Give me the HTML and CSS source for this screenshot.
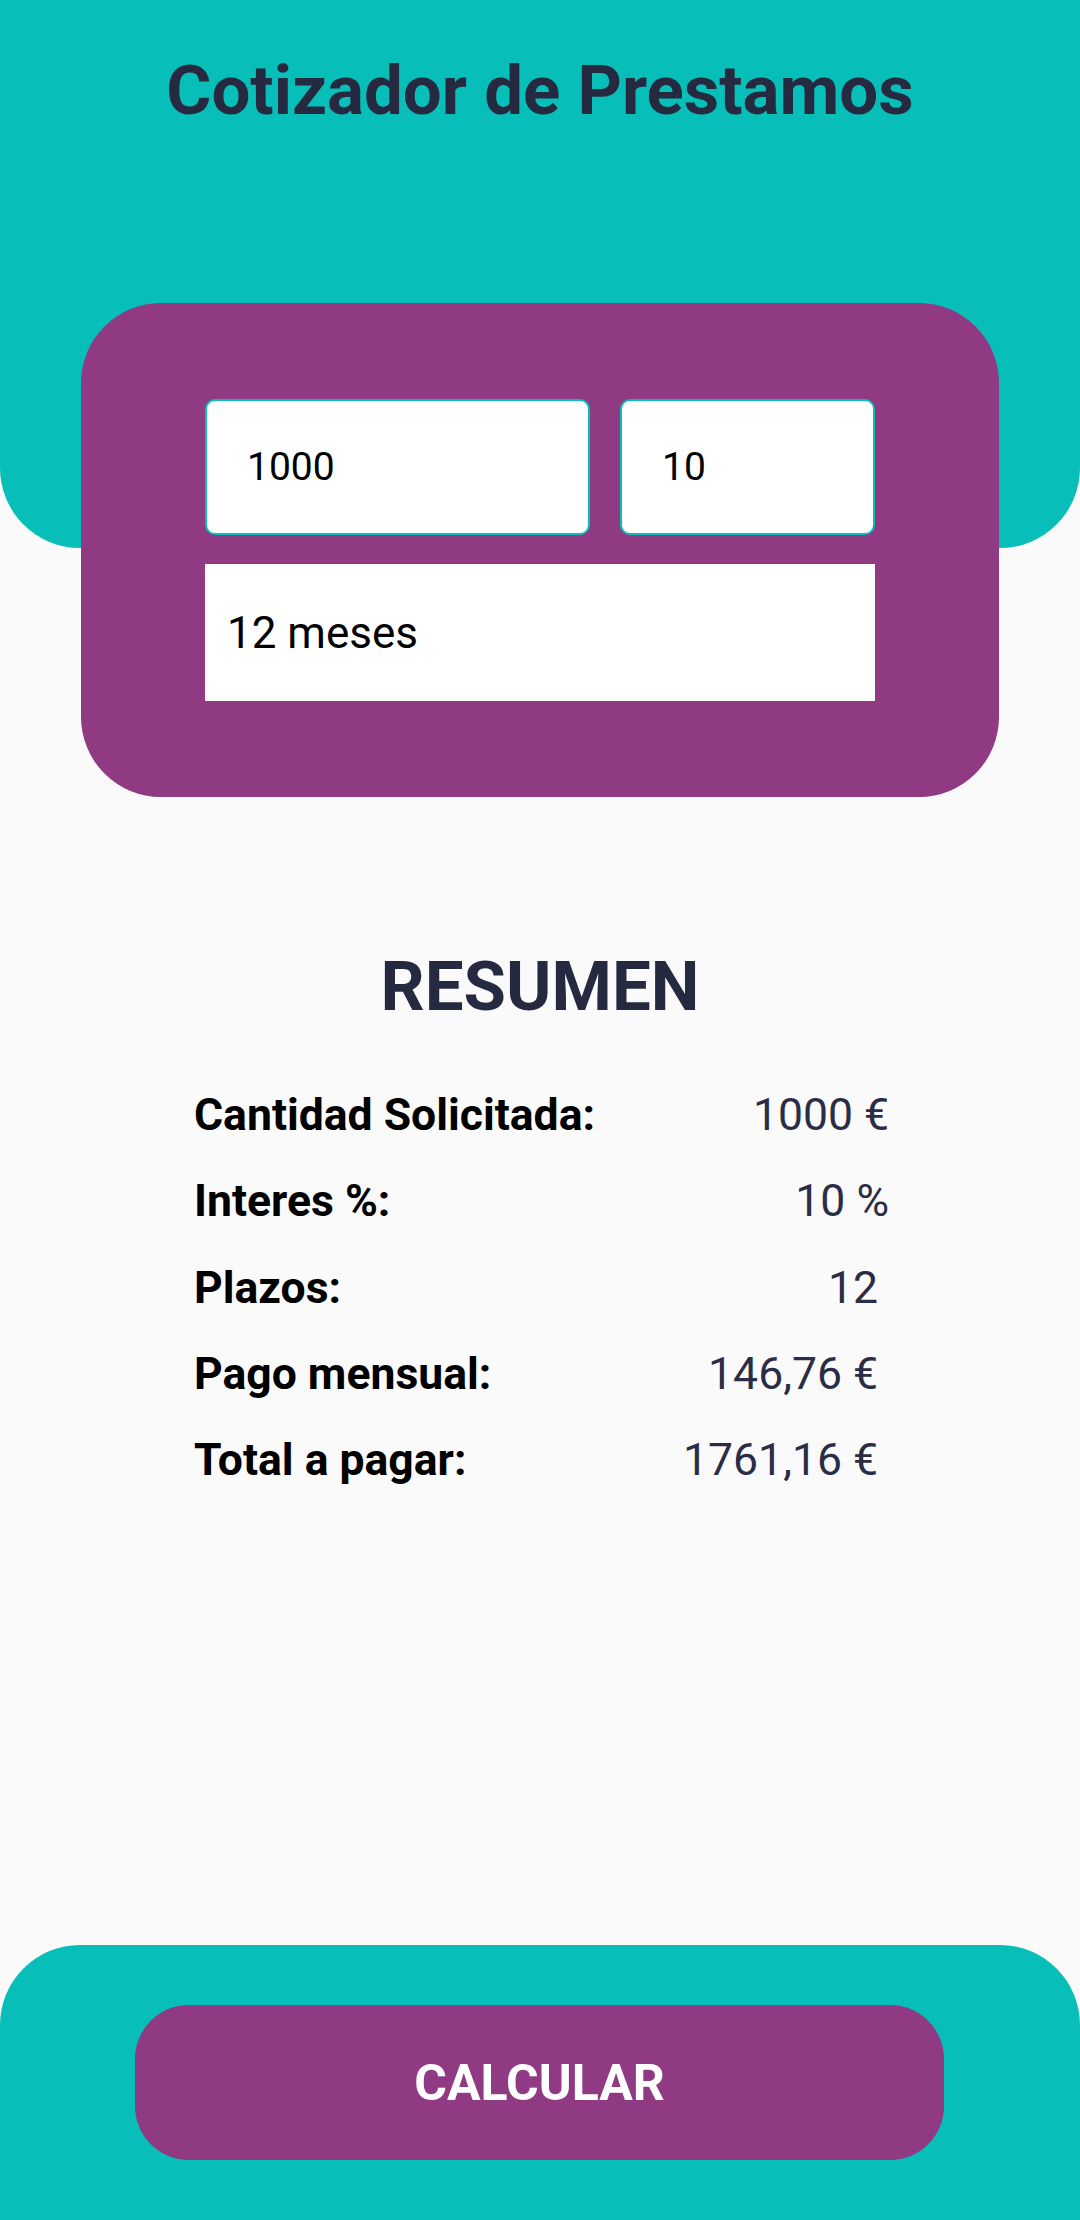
FILE: index.html
```html
<!DOCTYPE html>
<html lang="es">
<head>
<meta charset="utf-8">
<title>Cotizador de Prestamos</title>
<link rel="stylesheet" href="styles.css">
</head>
<body>
<div class="app">
  <header class="header">
    <h1 class="title">Cotizador de Prestamos</h1>
  </header>
  <section class="card">
    <div class="inputs-row">
      <div class="field field-amount">1000</div>
      <div class="field field-rate">10</div>
    </div>
    <div class="select">12 meses</div>
  </section>
  <section class="summary">
    <h2 class="summary-title">RESUMEN</h2>
    <div class="rows">
      <div class="row"><span class="label">Cantidad Solicitada:</span><span class="value">1000 €</span></div>
      <div class="row"><span class="label">Interes %:</span><span class="value">10 %</span></div>
      <div class="row"><span class="label">Plazos:</span><span class="value">12 </span></div>
      <div class="row"><span class="label">Pago mensual:</span><span class="value">146,76 € </span></div>
      <div class="row"><span class="label">Total a pagar:</span><span class="value">1761,16 € </span></div>
    </div>
  </section>
  <footer class="footer">
    <button class="calc-btn">CALCULAR</button>
  </footer>
</div>
</body>
</html>
```
FILE: styles.css
```css
* { box-sizing: border-box; }
html, body {
  margin: 0;
  padding: 0;
  background: #FAFAFA;
  font-family: Roboto, "Noto Sans", sans-serif;
}
.app {
  width: 1080px;
  min-height: 2220px;
  display: flex;
  flex-direction: column;
}
.header {
  height: 548px;
  background: #08BEB9;
  border-radius: 0 0 80px 80px;
  padding-top: 56px;
}
.title {
  margin: 0;
  text-align: center;
  font-size: 69px;
  line-height: 69px;
  font-weight: 700;
  color: #262A40;
}
.card {
  margin: -245px 81px 0 81px;
  background: #8F3A83;
  border-radius: 80px;
  padding: 96px 124px;
  display: flex;
  flex-direction: column;
  gap: 29px;
}
.inputs-row {
  display: flex;
  gap: 30px;
}
.field {
  height: 136px;
  background: #FFFFFF;
  border: 2px solid #08BEB9;
  border-radius: 10px;
  display: flex;
  align-items: center;
  font-size: 39px;
  color: #000;
  padding-left: 40px;
}
.field-amount { width: 385px; }
.field-rate { width: 255px; }
.select {
  height: 137px;
  background: #FFFFFF;
  display: flex;
  align-items: center;
  padding-left: 22px;
  font-size: 44px;
  color: #000;
}
.summary {
  margin-top: 155px;
}
.summary-title {
  margin: 0;
  text-align: center;
  font-size: 69px;
  line-height: 69px;
  font-weight: 700;
  color: #262A40;
}
.rows {
  margin: 51px 191px 0 194px;
}
.row {
  display: flex;
  justify-content: space-between;
  font-size: 44.5px;
  line-height: 86.25px;
}
.label {
  font-weight: 700;
  color: #000;
}
.value {
  color: #2A2D45;
  white-space: pre;
}
.footer {
  margin-top: auto;
  height: 275px;
  background: #08BEB9;
  border-radius: 80px 80px 0 0;
  padding: 60px 136px 60px 135px;
}
.calc-btn {
  width: 100%;
  height: 155px;
  border: none;
  border-radius: 54px;
  background: #8F3A83;
  color: #FFFFFF;
  font-family: Roboto, "Noto Sans", sans-serif;
  font-size: 50px;
  font-weight: 700;
  padding: 0;
}
```
